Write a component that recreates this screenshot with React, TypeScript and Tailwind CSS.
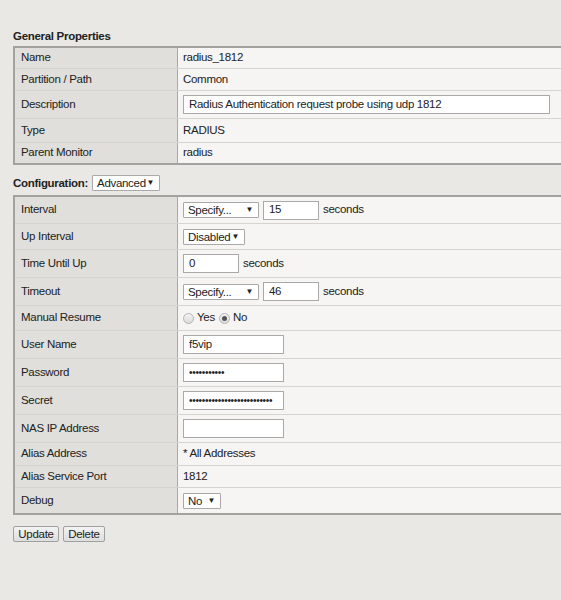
import React from 'react';

const Select: React.FC<{ label: string; w: string }> = ({ label, w }) => (
    <div className={`${w} h-[16px] flex items-center justify-between bg-white border border-[#a9a9a9] pl-[4px] pr-[5px] rounded-[1px]`}>
        <span className="leading-[14px]">{label}</span>
        <span className="text-[8px] leading-none">▼</span>
    </div>
);

const TextBox: React.FC<{ w: string; value?: string; dots?: number }> = ({ w, value, dots }) => (
    <div className={`${w} h-[19px] flex items-center bg-white border border-[#a9a9a9] px-[5px] overflow-hidden whitespace-nowrap`}>
        {dots ? <span className="text-[10px] tracking-[-0.3px]">{'•'.repeat(dots)}</span> : value}
    </div>
);

const Radio: React.FC<{ checked?: boolean }> = ({ checked }) => (
    <span className="w-[11px] h-[11px] rounded-full border border-[#b4b4b4] bg-gradient-to-b from-[#f4f4f4] to-[#dcdcdc] flex items-center justify-center">
        {checked && <span className="w-[5px] h-[5px] rounded-full bg-[#555]" />}
    </span>
);

const Row: React.FC<{ label: string; h: string; last?: boolean; children: React.ReactNode }> = ({ label, h, last, children }) => (
    <div className={`flex ${h} ${last ? '' : 'border-b border-[#d5d4d0]'}`}>
        <div className="w-[163px] shrink-0 bg-[#e0dfdb] border-r border-[#a9a8a4] pl-[6px] flex items-center">{label}</div>
        <div className="flex-1 bg-[#f6f5f3] pl-[5px] flex items-center gap-[4px]">{children}</div>
    </div>
);

export default function App() {
    return (
        <div className="min-h-[600px] bg-[#e9e8e4] text-[11.5px] tracking-[-0.3px] text-[#222] font-['Liberation_Sans',Arial,sans-serif] overflow-hidden pt-[29px] pl-[13px]">
            <div className="font-bold leading-[14px] mb-[3px]">General Properties</div>
            <div className="w-[600px] border-y-2 border-l-2 border-[#a3a29e]">
                <Row label="Name" h="h-[21px]">radius_1812</Row>
                <Row label="Partition / Path" h="h-[22px]">Common</Row>
                <Row label="Description" h="h-[28px]">
                    <TextBox w="w-[367px]" value="Radius Authentication request probe using udp 1812" />
                </Row>
                <Row label="Type" h="h-[24px]">RADIUS</Row>
                <Row label="Parent Monitor" h="h-[20px]" last>radius</Row>
            </div>

            <div className="flex items-center mt-[9px] mb-[4px] h-[17px]">
                <span className="font-bold mr-[4px] mt-[3px]">Configuration:</span>
                <Select label="Advanced" w="w-[68px]" />
            </div>

            <div className="w-[600px] border-y-2 border-l-2 border-[#a3a29e]">
                <Row label="Interval" h="h-[27px]">
                    <Select label="Specify..." w="w-[76px]" />
                    <TextBox w="w-[56px]" value="15" />
                    <span>seconds</span>
                </Row>
                <Row label="Up Interval" h="h-[26px]">
                    <Select label="Disabled" w="w-[62px]" />
                </Row>
                <Row label="Time Until Up" h="h-[28px]">
                    <TextBox w="w-[56px]" value="0" />
                    <span>seconds</span>
                </Row>
                <Row label="Timeout" h="h-[28px]">
                    <Select label="Specify..." w="w-[76px]" />
                    <TextBox w="w-[56px]" value="46" />
                    <span>seconds</span>
                </Row>
                <Row label="Manual Resume" h="h-[25px]">
                    <div className="flex items-center">
                        <Radio />
                        <span className="ml-[3px] mr-[4px]">Yes</span>
                        <Radio checked />
                        <span className="ml-[3px]">No</span>
                    </div>
                </Row>
                <Row label="User Name" h="h-[28px]">
                    <TextBox w="w-[101px]" value="f5vip" />
                </Row>
                <Row label="Password" h="h-[28px]">
                    <TextBox w="w-[101px]" dots={11} />
                </Row>
                <Row label="Secret" h="h-[28px]">
                    <TextBox w="w-[101px]" dots={26} />
                </Row>
                <Row label="NAS IP Address" h="h-[28px]">
                    <TextBox w="w-[101px]" />
                </Row>
                <Row label="Alias Address" h="h-[23px]">* All Addresses</Row>
                <Row label="Alias Service Port" h="h-[22px]">1812</Row>
                <Row label="Debug" h="h-[25px]" last>
                    <Select label="No" w="w-[38px]" />
                </Row>
            </div>

            <div className="flex gap-[4px] mt-[11px]">
                <button className="h-[16px] w-[46px] border border-[#a0a0a0] rounded-[2px] bg-gradient-to-b from-[#f3f3f3] to-[#dedede] leading-[14px]">Update</button>
                <button className="h-[16px] w-[42px] border border-[#a0a0a0] rounded-[2px] bg-gradient-to-b from-[#f3f3f3] to-[#dedede] leading-[14px]">Delete</button>
            </div>
        </div>
    );
}
